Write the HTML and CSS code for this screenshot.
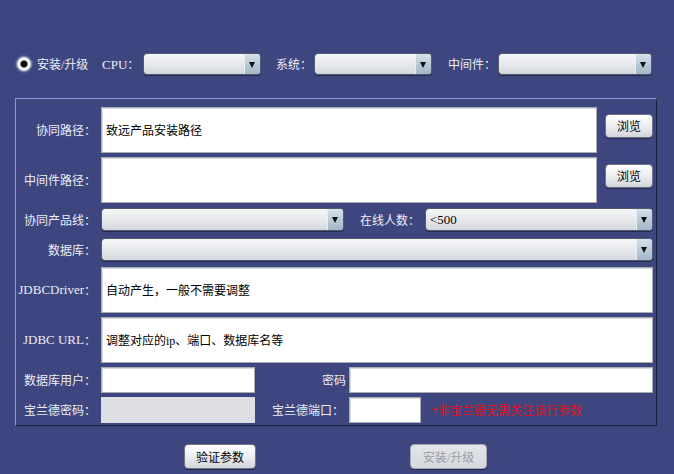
FILE: index.html
```html
<!DOCTYPE html>
<html lang="zh">
<head>
    <meta charset="UTF-8">
    <title>安装/升级</title>
    <link rel="stylesheet" href="styles.css">
</head>
<body>
    <!-- Ligne du haut -->
    <div class="top-row">
        <span class="radio"></span>
        <span class="radio-text">安装/升级</span>
        <span class="top-label cpu-label"><span class="latin">CPU</span>：</span>
        <div class="combo combo-cpu"><span class="combo-value"></span><span class="combo-arrow"></span></div>
        <span class="top-label os-label">系统：</span>
        <div class="combo combo-os"><span class="combo-value"></span><span class="combo-arrow"></span></div>
        <span class="top-label mw-label">中间件：</span>
        <div class="combo combo-mw"><span class="combo-value"></span><span class="combo-arrow"></span></div>
    </div>

    <!-- Panneau des paramètres -->
    <div class="panel">
        <div class="row tall">
            <label class="label">协同路径：</label>
            <div class="field grow">致远产品安装路径</div>
            <button class="btn browse">浏览</button>
        </div>
        <div class="row tall">
            <label class="label">中间件路径：</label>
            <div class="field grow"></div>
            <button class="btn browse">浏览</button>
        </div>
        <div class="row combo-row gap5">
            <label class="label">协同产品线：</label>
            <div class="combo combo-line"><span class="combo-value"></span><span class="combo-arrow"></span></div>
            <label class="label mid-label">在线人数：</label>
            <div class="combo grow"><span class="combo-value">&lt;500</span><span class="combo-arrow"></span></div>
        </div>
        <div class="row combo-row gap7">
            <label class="label">数据库：</label>
            <div class="combo grow"><span class="combo-value"></span><span class="combo-arrow"></span></div>
        </div>
        <div class="row tall gap6">
            <label class="label"><span class="latin">JDBCDriver</span>：</label>
            <div class="field grow">自动产生，一般不需要调整</div>
        </div>
        <div class="row tall">
            <label class="label"><span class="latin">JDBC URL</span>：</label>
            <div class="field grow">调整对应的ip、端口、数据库名等</div>
        </div>
        <div class="row small">
            <label class="label">数据库用户：</label>
            <div class="field short"></div>
            <label class="label pair-label pwd-label">密码</label>
            <div class="field grow"></div>
        </div>
        <div class="row small">
            <label class="label">宝兰德密码：</label>
            <div class="field short disabled"></div>
            <label class="label pair-label">宝兰德端口：</label>
            <div class="field port"></div>
            <span class="note">*非宝兰德无需关注该行参数</span>
        </div>
    </div>

    <!-- Boutons du bas -->
    <div class="bottom-row">
        <button class="btn check">验证参数</button>
        <button class="btn install" disabled>安装/升级</button>
    </div>
</body>
</html>
```

FILE: styles.css
```css
* {
    margin: 0;
    padding: 0;
    box-sizing: border-box;
}

body {
    font-family: "Liberation Serif", "Noto Sans CJK SC", serif;
    font-size: 12px;
    background-color: #3e4680;
    color: #eceef5;
    width: 674px;
    height: 474px;
    overflow: hidden;
}

.latin {
    font-size: 13px;
}

/* Ligne du haut */
.top-row {
    display: flex;
    align-items: center;
    height: 22px;
    margin-top: 53px;
    padding-left: 16px;
}

.radio {
    width: 16px;
    height: 16px;
    flex-shrink: 0;
    border-radius: 50%;
    border: 1px solid #7d88a6;
    background: radial-gradient(circle, #000 0 2.6px, #444 3.2px, #fff 4.2px, #e4e8ee 6px, #b9c2d0 100%);
    box-shadow: 0 0 0 1px #56608c;
}

.radio-text {
    width: 70px;
    padding-left: 5px;
}

.top-label {
    white-space: nowrap;
}

.cpu-label { width: 41px; }
.os-label { width: 38px; margin-left: 15px; }
.mw-label { width: 50px; margin-left: 16px; }

.combo {
    display: flex;
    height: 23px;
    border: 1px solid #555b6e;
    border-radius: 4px;
    background: linear-gradient(#f6f7f9, #e4e6ea 60%, #d3d6dc);
    overflow: hidden;
    color: #000;
    box-shadow: 0 1px 0 rgba(20, 24, 50, 0.6);
}

.top-row .combo { height: 22px; }

.combo-cpu, .combo-os { width: 118px; }
.combo-mw { width: 154px; }
.combo-line { width: 243px; }

.combo-value {
    flex: 1;
    padding-left: 4px;
    display: flex;
    align-items: center;
    font-size: 13px;
}

.combo-arrow {
    width: 16px;
    border-left: 1px solid #e8eef4;
    background: linear-gradient(#d6e2ec, #b4c7d6 60%, #a2b7c8);
    position: relative;
}

.combo-arrow::after {
    content: "";
    position: absolute;
    left: 4px;
    top: 8px;
    border-left: 3.5px solid transparent;
    border-right: 3.5px solid transparent;
    border-top: 6px solid #111;
}

/* Panneau */
.panel {
    width: 642px;
    height: 328px;
    margin: 23px 0 0 15px;
    border: 1px solid;
    border-color: #8c96ec #1c2140 #1c2140 #8c96ec;
    padding: 8px 3px 0 0;
}

.row {
    display: flex;
    margin-top: 4px;
}

.row:first-child { margin-top: 0; }
.row.tall { height: 46px; }
.row.combo-row { height: 23px; }
.row.small { height: 26px; }
.row.gap5 { margin-top: 5px; }
.row.gap6 { margin-top: 6px; }
.row.gap7 { margin-top: 7px; }

.label {
    width: 85px;
    flex-shrink: 0;
    display: flex;
    align-items: center;
    justify-content: flex-end;
    padding-right: 5px;
    white-space: nowrap;
}

.mid-label { width: 81px; padding-right: 5px; }
.pair-label { width: 94px; }
.pwd-label { padding-right: 3px; }

.field {
    background-color: #fff;
    border: 1px solid #a9abb0;
    box-shadow: inset 1px 1px 0 #dcdde0;
    color: #000;
    display: flex;
    align-items: center;
    padding-left: 4px;
    font-size: 12px;
}

.grow { flex: 1; }
.short { width: 154px; }
.port { width: 72px; }

.field.disabled {
    background-color: #dcdee3;
    border-color: #dcdee3;
    box-shadow: none;
}

.note {
    margin-left: 11px;
    color: #e0141e;
    display: flex;
    align-items: center;
}

/* Boutons */
.btn {
    font-family: inherit;
    font-size: 12px;
    color: #000;
    border: 1px solid #6f7482;
    border-radius: 4px;
    background: linear-gradient(#ffffff, #eceef1 50%, #d2d5db);
    box-shadow: 0 1px 0 rgba(20, 24, 50, 0.6);
}

.browse {
    width: 48px;
    height: 24px;
    margin: 7px 0 0 8px;
}

.bottom-row {
    display: flex;
    margin-top: 18px;
}

.check {
    width: 72px;
    height: 25px;
    margin-left: 184px;
}

.install {
    width: 77px;
    height: 25px;
    margin-left: 154px;
    color: #9b9fa8;
    border-color: #a5a9b3;
    background: linear-gradient(#e2e4e8, #d5d8dd);
}
```
